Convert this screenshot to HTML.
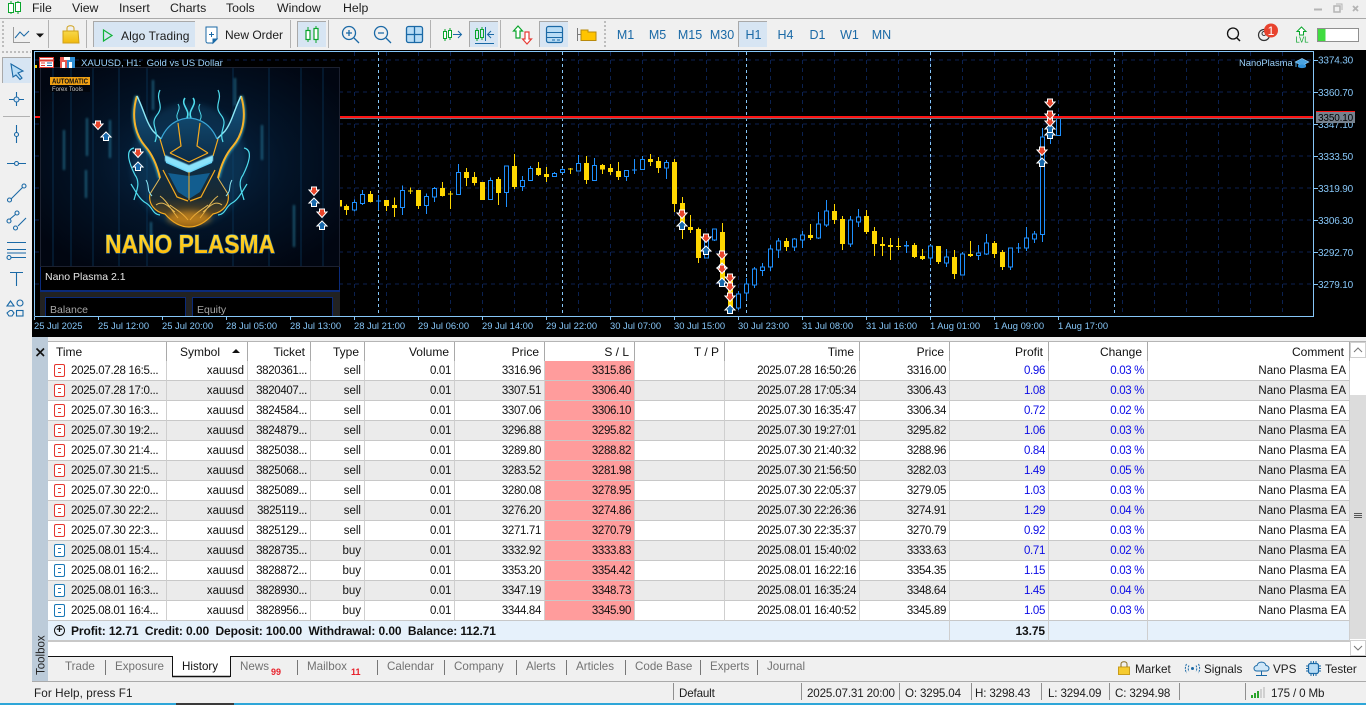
<!DOCTYPE html>
<html><head><meta charset="utf-8"><title>MetaTrader</title>
<style>
html,body{margin:0;padding:0;width:1366px;height:705px;overflow:hidden;background:#f0f0f0;font-family:"Liberation Sans",sans-serif}
svg#m{position:absolute;left:0;top:0}
svg text{font-family:"Liberation Sans",sans-serif}
.mn{font-size:12.3px;fill:#1c1c1c}
.tb{font-size:12px;fill:#1c1c1c}
.tf{font-size:12.5px;fill:#1a69a6;text-anchor:middle}
.pr{font-size:10px;fill:#86c6f7;letter-spacing:-.15px}
.tm{font-size:9.4px;fill:#86c6f7}
.tab{font-size:11.6px;fill:#727272}
.st{font-size:11.7px;fill:#1c1c1c}
.st2{font-size:11.6px;fill:#1c1c1c;letter-spacing:-.15px}
table{position:absolute;left:48px;top:342px;width:1302px;border-collapse:separate;border-spacing:0;table-layout:fixed;font-size:11.5px;letter-spacing:-.35px;color:#111;background:#fff}
td,th{height:20px;padding:1px 3px 0 0;box-sizing:border-box;text-align:right;white-space:nowrap;overflow:hidden;border-right:1px solid #cfcfcf;border-bottom:1px solid #c8c8c8;font-weight:normal;position:relative}
th{height:19px;padding:0 5px 0 0;border-right:1px solid #a9a9a9;border-bottom:0;font-size:12px;letter-spacing:0}
td:nth-child(2),td:nth-child(4),td:nth-child(13){letter-spacing:0}
th.l{text-align:left;padding-left:8px}
tr.a td{background:#ebebeb}
td.sl,tr.a td.sl{background:#ff9c9c}
td.n{text-align:left;padding-left:23px;letter-spacing:-.3px}
td.b{color:#0a0ae6}
i{position:absolute;left:6px;top:3px;width:9px;height:11px;border:1px solid #e5352d;border-radius:2px;background:#fff}
i:before,i:after{content:"";position:absolute;left:3px;width:3px;height:1px;background:#e5352d}
i:before{top:3px}i:after{top:7px}
i.u{border-color:#1977b5}i.u:before,i.u:after{background:#1977b5}
tr.s td{background:#e6f1fb;font-weight:bold;color:#111;font-size:12px;letter-spacing:-.1px}
tr.s td.n{padding-left:23px;overflow:visible}
</style></head><body>
<svg id="m" width="1366" height="705" viewBox="0 0 1366 705" xmlns="http://www.w3.org/2000/svg">
<defs>
<radialGradient id="bg" cx="50%" cy="48%" r="62%"><stop offset="0" stop-color="#08294a"/><stop offset=".5" stop-color="#031428"/><stop offset="1" stop-color="#010611"/></radialGradient>
<linearGradient id="hm" x1="0" y1="0" x2="0" y2="1"><stop offset="0" stop-color="#14547e"/><stop offset=".5" stop-color="#0b2c48"/><stop offset=".78" stop-color="#1b2a30"/><stop offset="1" stop-color="#8a5a14"/></linearGradient>
<linearGradient id="gd" x1="0" y1="0" x2="0" y2="1"><stop offset="0" stop-color="#ffe23a"/><stop offset="1" stop-color="#ffb400"/></linearGradient>
<linearGradient id="bag" x1="0" y1="0" x2="0" y2="1"><stop offset="0" stop-color="#f7d84a"/><stop offset="1" stop-color="#f2b90c"/></linearGradient>
<filter id="b1" x="-50%" y="-50%" width="200%" height="200%"><feGaussianBlur stdDeviation="1"/></filter>
<filter id="b2" x="-50%" y="-50%" width="200%" height="200%"><feGaussianBlur stdDeviation="3"/></filter>
<filter id="b3" x="-50%" y="-50%" width="200%" height="200%"><feGaussianBlur stdDeviation=".5"/></filter>
<g id="dn"><path d="M-2.500 -4H2.500V-1H5L0 4.500L-5 -1H-2.500Z" fill="#e8452b" stroke="#fff" stroke-width="1"/></g>
<g id="up"><path d="M-2.500 4.500H2.500V1H5L0 -4L-5 1H-2.500Z" fill="#1668ac" stroke="#fff" stroke-width="1"/></g>
<g id="half">
<path d="M137 96C132 112 133 132 145 146C152 154 157 165 160 178" fill="none" stroke="#4fdcee" stroke-width="4" opacity=".55" filter="url(#b1)"/>
<path d="M189 118C175 119 166 127 161 139L153 131C146 122 144 110 137 96C132 112 133 132 145 146C152 154 157 165 160 178C157 184 152 188 150 194C148 204 155 212 165 214C172 222 180 227 189 227Z" fill="url(#hm)"/>
<path d="M137 96C132 112 133 132 145 146C152 154 157 165 160 178" fill="none" stroke="#f7b32a" stroke-width="2"/>
<path d="M137 96C144 110 146 122 153 131L161 139" fill="none" stroke="#8ee9f7" stroke-width="1.400"/>
<path d="M161 139C166 127 175 119 189 118" fill="none" stroke="#3aa6d6" stroke-width="1.200"/>
<path d="M178 123L181 146L170 153M160 139L165 156M163 170L177 197L188 201M150 194C148 204 155 212 165 214C172 222 180 227 189 227M170 153L189 162" fill="none" stroke="#f7ab1e" stroke-width="1.200"/>
<path d="M165 156L189 166V173L166 163Z" fill="#5fd0f5"/>
<path d="M168 173L189 176V199L178 192Z" fill="#125d8f"/>
<path d="M160 178L150 194M156 205C163 200 168 206 175 212M160 196C166 200 170 208 178 218M170 205C176 210 182 212 188 220" fill="none" stroke="#f7c85a" stroke-width="1" opacity=".9"/>
<path d="M160 90C155 100 165 105 157 115S160 130 155 142" fill="none" stroke="#4fdcee" stroke-width="1.200"/>
<path d="M193 98C198 105 187 110 191 118" fill="none" stroke="#4fdcee" stroke-width="1.600"/>
<path d="M178 104C182 110 174 114 178 120" fill="none" stroke="#4fdcee" stroke-width="1"/>
<path d="M134 148C124 150 130 165 135 175C141 183 136 192 134 200" fill="none" stroke="#4fdcee" stroke-width="1.200"/>
<path d="M131 184C136 192 140 200 146 203C153 207 152 214 160 215" fill="none" stroke="#4fdcee" stroke-width="1.200"/>
<path d="M146 180C150 186 146 190 152 196" fill="none" stroke="#8ee9f7" stroke-width="1"/>
</g>
</defs>

<!-- base menu -->
<rect width="1366" height="18" fill="#f0f0f0"/>
<rect y="18" width="1366" height="1" fill="#a9a9a9"/>
<path d="M11 1V14M18 1V14" stroke="#0aa52c" stroke-width="1"/>
<rect x="8.500" y="3.500" width="5" height="9" fill="#fff" stroke="#0aa52c"/><rect x="15.500" y="2.500" width="5" height="9" fill="#fff" stroke="#0aa52c"/>
<text class="mn" x="32" y="12">File</text><text class="mn" x="72" y="12">View</text><text class="mn" x="119" y="12">Insert</text><text class="mn" x="170" y="12">Charts</text><text class="mn" x="226" y="12">Tools</text><text class="mn" x="277" y="12">Window</text><text class="mn" x="343" y="12">Help</text>
<path d="M1314 9.500H1322" stroke="#b4b4b4" stroke-width="2"/>
<rect x="1334" y="6" width="6" height="6" fill="none" stroke="#b4b4b4" stroke-width="1.500"/><path d="M1336 4H1342V10" fill="none" stroke="#b4b4b4" stroke-width="1"/>
<path d="M1353 6L1358 11M1358 6L1353 11" stroke="#b4b4b4" stroke-width="1.800"/>

<!-- toolbar -->
<path d="M3 21V48" stroke="#bdbdbd" stroke-width="2" stroke-dasharray="2 2"/>
<path d="M13.500 27V42.500H30" fill="none" stroke="#9a9a9a"/><path d="M15 38L20 32L24 36L29 31" fill="none" stroke="#1a69a6"/>
<path d="M36 33.500H44L40 37.500Z" fill="#111"/>
<path d="M48.500 20V48M86.500 20V48M290.500 20V48M328.500 20V48M430.500 20V48M500.500 20V48" stroke="#b2b2b2"/>
<path d="M63 31H78L79 43H63Z" fill="url(#bag)" stroke="#cfa11b"/><path d="M67 31V28C67 25 74 25 74 28V31" fill="none" stroke="#cfa11b"/>
<rect x="93" y="21" width="102" height="26" fill="#d7e5f3"/><path d="M93.500 47V21.500H195" fill="none" stroke="#a9a9a9"/>
<path d="M103.500 30V41L112 35.500Z" fill="none" stroke="#12b33a" stroke-width="1.200"/>
<text class="tb" x="121" y="40" letter-spacing=".1">Algo Trading</text>
<path d="M206 27H217V39L213 43H208C206 43 206 42 206 41Z" fill="#fff" stroke="#1a69a6"/><path d="M209 34.500H214M211.500 32V37M213 43L217 39H213Z" stroke="#1a69a6" fill="#1a69a6"/>
<text class="tb" x="225" y="39">New Order</text>
<rect x="297" y="21" width="29" height="26" fill="#d7e5f3"/><path d="M297.500 47V21.500H326" fill="none" stroke="#a9a9a9"/>
<path d="M308 27V42M316 26V43" stroke="#0aa52c"/><rect x="306" y="30.500" width="4" height="9" fill="#fff" stroke="#0aa52c" stroke-width="1.200"/><rect x="314" y="28.500" width="4" height="11" fill="#fff" stroke="#0aa52c" stroke-width="1.200"/>
<g fill="none" stroke="#1a69a6" stroke-width="1.300"><circle cx="349" cy="33" r="6.500"/><path d="M354 38L359 43M346 33H352M349 30V36"/><circle cx="381" cy="33" r="6.500"/><path d="M386 38L391 43M378 33H384"/></g>
<rect x="406.500" y="26.500" width="16" height="16" rx="2" fill="#b8dcf5" stroke="#1a69a6" stroke-width="1.300"/><path d="M414.500 27V42M407 34.500H422" stroke="#1a69a6" stroke-width="1.300"/>
<g stroke="#0aa52c" fill="#fff"><path d="M445 29V41M450 28V40" /><rect x="443.500" y="31.500" width="3" height="7"/><rect x="448.500" y="30.500" width="3" height="7"/></g>
<path d="M453 34.500H461M458 31L461.500 34.500L458 38" fill="none" stroke="#1a69a6"/>
<rect x="469" y="21" width="29" height="26" fill="#d7e5f3"/><path d="M469.500 47V21.500H498" fill="none" stroke="#a9a9a9"/>
<g stroke="#0aa52c" fill="#d7e5f3"><path d="M477 28V41M482 27V40"/><rect x="475.500" y="30.500" width="3" height="8"/><rect x="480.500" y="29.500" width="3" height="8"/></g>
<path d="M485.500 27V41M494 34.500H488M491 31L487.500 34.500L491 38M475 43.500H494" fill="none" stroke="#1a69a6"/>
<path d="M518 26L513.500 31H516V38H520V31H522.500Z" fill="#fff" stroke="#0aa52c" stroke-width="1.200"/><path d="M527 44L531.500 39H529V32H525V39H522.500Z" fill="#fff" stroke="#e63b35" stroke-width="1.200"/>
<rect x="539" y="21" width="29" height="26" fill="#d7e5f3"/><path d="M539.500 47V21.500H568" fill="none" stroke="#a9a9a9"/>
<rect x="546.500" y="26.500" width="16" height="16" rx="2" fill="#b8dcf5" stroke="#1a69a6" stroke-width="1.200"/><path d="M547 32.500H562M547 37.500H562M552 40H555M557 40H560" stroke="#1a69a6"/>
<path d="M577.500 28V41M578 34.500H581" stroke="#7a7a7a"/><path d="M581 30H588V32H596V40.500H581Z" fill="#ffc400" stroke="#b98a0c"/>
<path d="M605 21V48" stroke="#bdbdbd" stroke-width="2" stroke-dasharray="2 2"/>
<rect x="738" y="21" width="29" height="26" fill="#d7e5f3"/><path d="M738.500 47V21.500H767" fill="none" stroke="#a9a9a9"/>
<text class="tf" x="625.500" y="39">M1</text><text class="tf" x="657.500" y="39">M5</text><text class="tf" x="690" y="39">M15</text><text class="tf" x="722" y="39">M30</text><text class="tf" x="753.500" y="39">H1</text><text class="tf" x="785.500" y="39">H4</text><text class="tf" x="817.500" y="39">D1</text><text class="tf" x="849.500" y="39">W1</text><text class="tf" x="881.500" y="39">MN</text>
<circle cx="1233" cy="33.500" r="5.500" fill="none" stroke="#111" stroke-width="1.300"/><path d="M1237 38L1240 41" stroke="#111" stroke-width="1.500"/>
<circle cx="1264" cy="35" r="5.500" fill="none" stroke="#333" stroke-width="1.200"/><circle cx="1264" cy="33.500" r="2" fill="none" stroke="#333"/>
<circle cx="1271" cy="30.500" r="7" fill="#e8432e"/><text x="1271" y="35" font-size="12" fill="#fff" text-anchor="middle">1</text>
<path d="M1301.500 27L1297 31.500H1299.500V35H1303.500V31.500H1306Z" fill="#fff" stroke="#0aa52c"/><text x="1295.500" y="42.500" font-size="8" fill="#0aa52c" textLength="13" lengthAdjust="spacingAndGlyphs">LVL</text>
<rect x="1317.500" y="28.500" width="41" height="13" fill="#fff" stroke="#8f8f8f"/><rect x="1318" y="29" width="7.500" height="12" fill="#3fdc3f"/>

<!-- black chart zone -->
<rect x="32" y="50" width="1334" height="287" fill="#000"/>
<path stroke="#0b2150" fill="none" stroke-dasharray="4 4" d="M35 60H1313M35 92H1313M35 124H1313M35 156H1313M35 188H1313M35 220H1313M35 252H1313M35 284H1313"/>
<path stroke="#0b2150" fill="none" stroke-dasharray="4 4" d="M354.500 52V316M386.500 52V316M418.500 52V316M450.500 52V316M482.500 52V316M514.500 52V316M546.500 52V316M578.500 52V316M610.500 52V316M642.500 52V316M674.500 52V316M706.500 52V316M738.500 52V316M770.500 52V316M802.500 52V316M834.500 52V316M866.500 52V316M898.500 52V316M930.500 52V316M962.500 52V316M994.500 52V316M1026.500 52V316M1058.500 52V316M1090.500 52V316M1122.500 52V316M1154.500 52V316M1186.500 52V316M1218.500 52V316M1250.500 52V316M1282.500 52V316"/>
<path stroke="#86c6f7" fill="none" stroke-dasharray="3 3" d="M378.500 52V316M562.500 52V316M746.500 52V316M930.500 52V316M1114.500 52V316"/>

<!-- candles A -->
<g transform="translate(340.170 140) scale(.33333)" shape-rendering="crispEdges">
<path fill="none" stroke="#ffd700" stroke-width="3" d="M19 193V225M91 153V187M139 180V213M163 172V231M211 142V162M235 150V207M307 126V170M331 153V207M379 84V138M403 96V136M427 126V180M475 111V195M523 42V147M595 66V108M619 81V126M691 84V102M739 48V132M787 72V102M811 72V105M835 66V120M931 42V78M955 51V99M1003 57V216M1027 171V297M1051 225V279M1075 262V369M1147 249V420M1171 402V510"/>
<path fill="#ffd700" d="M-10 180h15v20h-15zM12 198h15v12h-15zM84 162h15v24h-15zM132 180h15v18h-15zM156 195h15v9h-15zM204 151h15v3h-15zM228 150h15v48h-15zM300 144h15v24h-15zM324 160h15v3h-15zM372 96h15v18h-15zM396 111h15v18h-15zM420 126h15v54h-15zM468 117h15v42h-15zM516 78h15v63h-15zM588 84h15v21h-15zM612 102h15v9h-15zM684 86h15v3h-15zM732 69h15v51h-15zM780 75h15v13h-15zM804 84h15v12h-15zM828 93h15v18h-15zM924 57h15v9h-15zM948 63h15v21h-15zM996 66h15v126h-15zM1020 189h15v61h-15zM1044 261h15v9h-15zM1068 267h15v87h-15zM1140 276h15v144h-15zM1164 402h15v108h-15z"/>
<path fill="none" stroke="#1e90ff" stroke-width="3" d="M43 178V215M67 150V195M115 165V210M187 136V225M259 160V222M283 141V186M355 72V165M451 112V180M499 76V201M547 108V153M571 78V123M643 96V111M667 84V100M715 45V93M763 54V123M859 90V123M883 57V102M907 48V90M979 60V117M1099 282V355M1123 267V303"/>
<path fill="#000" stroke="#1e90ff" stroke-width="3" d="M37 187h12v23h-12zM61 163h12v28h-12zM181 151h12v52h-12zM253 169h12v28h-12zM277 145h12v26h-12zM349 97h12v67h-12zM445 121h12v58h-12zM493 78h12v79h-12zM541 121h12v19h-12zM565 85h12v37h-12zM637 100h12v9h-12zM661 88h12v10h-12zM709 70h12v23h-12zM757 76h12v46h-12zM853 91h12v19h-12zM901 58h12v31h-12zM973 67h12v17h-12zM1093 285h12v69h-12zM1117 267h12v33h-12z"/>
<path fill="#1e90ff" d="M108 181h15v4h-15zM876 88h15v4h-15z"/>
</g>
<!-- candles B -->
<g transform="translate(700.170 90) scale(.33333)" shape-rendering="crispEdges">
<path fill="none" stroke="#ffd700" stroke-width="3" d="M259 444V483M331 402V450M403 342V402M427 378V480M499 360V432M523 411V498M547 441V498M571 444V510M595 444V480M643 459V504M667 477V510M715 468V522M763 480V567M811 453V501M883 453V504M907 480V540"/>
<path fill="#ffd700" d="M252 453h15v18h-15zM324 435h15v9h-15zM396 363h15v27h-15zM420 387h15v75h-15zM492 378h15v48h-15zM516 423h15v39h-15zM540 462h15v6h-15zM564 465h15v6h-15zM588 468h15v3h-15zM636 465h15v36h-15zM660 498h15v9h-15zM708 468h15v48h-15zM756 501h15v51h-15zM804 492h15v6h-15zM876 459h15v33h-15zM900 486h15v45h-15z"/>
<path fill="none" stroke="#1e90ff" stroke-width="3" d="M115 603V660M139 564V630M163 531V594M187 519V558M211 465V543M235 444V504M283 444V483M307 423V474M355 366V447M379 330V411M451 378V471M475 357V411M619 453V489M691 465V522M739 477V531M787 486V555M835 465V510M859 432V495M931 474V540M955 459V489M979 411V483M1003 423V459M1027 114V456M1051 100V162M1075 72V137"/>
<path fill="#000" stroke="#1e90ff" stroke-width="3" d="M109 612h12v42h-12zM133 582h12v27h-12zM157 537h12v48h-12zM181 531h12v11h-12zM205 477h12v54h-12zM229 453h12v27h-12zM277 447h12v24h-12zM301 435h12v15h-12zM349 402h12v42h-12zM373 363h12v42h-12zM445 390h12v72h-12zM469 381h12v15h-12zM685 468h12v36h-12zM733 501h12v18h-12zM781 492h12v63h-12zM829 489h12v7h-12zM853 459h12v33h-12zM925 474h12v57h-12zM973 444h12v30h-12zM997 432h12v15h-12zM1021 141h12v293h-12zM1069 81h12v56h-12z"/>
<path fill="#1e90ff" d="M612 465h15v4h-15zM948 472h15v4h-15z"/>
</g>

<!-- panel -->
<rect x="40" y="67" width="300" height="200" fill="url(#bg)"/>
<rect x="40.500" y="67.500" width="299" height="199" fill="none" stroke="#1c2130"/>
<g fill="#0a3558" opacity=".4"><rect x="52" y="68" width="2" height="198"/><rect x="70" y="68" width="2" height="198"/><rect x="92" y="68" width="2" height="198"/><rect x="118" y="68" width="2" height="198"/><rect x="146" y="68" width="2" height="198"/><rect x="232" y="68" width="2" height="198"/><rect x="268" y="68" width="2" height="198"/><rect x="300" y="68" width="2" height="198"/><rect x="322" y="68" width="2" height="198"/></g>
<g fill="#38a9cf" filter="url(#b1)" opacity=".5"><rect x="63" y="130" width="2" height="40"/><rect x="86" y="118" width="2" height="38"/><rect x="109" y="120" width="2" height="38"/><rect x="152" y="80" width="2" height="30"/><rect x="85" y="170" width="2" height="28"/><rect x="150" y="222" width="2" height="26"/><rect x="261" y="125" width="2" height="35"/><rect x="293" y="205" width="2" height="42"/><rect x="234" y="78" width="2" height="28"/></g>
<ellipse cx="189" cy="165" rx="58" ry="62" fill="#1b6fa0" opacity=".22" filter="url(#b2)"/>
<use href="#half"/><use href="#half" transform="translate(378 0) scale(-1 1)"/>
<path d="M165 155L189 165L213 155L213 161L189 172L165 161Z" fill="#8ae2fb" filter="url(#b3)"/>
<path d="M189 172V200" stroke="#f7ab1e"/>
<ellipse cx="189" cy="218" rx="22" ry="7" fill="#e89a1c" opacity=".6" filter="url(#b2)"/>
<rect x="50" y="77" width="40" height="8" fill="#f0a114"/><rect x="50" y="85" width="40" height="7" fill="#02060d"/>
<text x="52" y="83.500" font-size="7" font-weight="bold" fill="#111" textLength="36" lengthAdjust="spacingAndGlyphs">AUTOMATIC</text>
<text x="52" y="91" font-size="6" fill="#c8c8c8">Forex Tools</text>
<text x="105" y="253" font-size="26" font-weight="bold" fill="url(#gd)" stroke="#2d6797" stroke-width="1.200" paint-order="stroke" textLength="170" lengthAdjust="spacingAndGlyphs">NANO PLASMA</text>
<rect x="40" y="267" width="300" height="25" fill="#000"/><path d="M40.500 267V292M339.500 267V292" stroke="#0a2a7a"/>
<rect x="40" y="290" width="300" height="2" fill="#0a2a7a"/>
<rect x="40" y="292" width="300" height="24" fill="#222"/>
<rect x="45.500" y="297.500" width="140" height="19" fill="#000" stroke="#0a2a7a"/><rect x="192.500" y="297.500" width="140" height="19" fill="#000" stroke="#0a2a7a"/>
<text x="45" y="280" font-size="10.500" fill="#e8e8e8">Nano Plasma 2.1</text>
<text x="50" y="313" font-size="10.500" fill="#a8a8a8">Balance</text><text x="197" y="313" font-size="10.500" fill="#a8a8a8">Equity</text>

<!-- red line -->
<rect x="35" y="116" width="5" height="2" fill="#ff1414"/><rect x="340" y="116" width="973" height="2" fill="#ff1414"/><rect x="340" y="118" width="973" height="1" fill="#6f747e"/>
<!-- markers -->
<use href="#dn" x="98" y="125"/><use href="#up" x="106" y="136"/><use href="#dn" x="138" y="153"/><use href="#up" x="138" y="166"/><use href="#dn" x="314" y="191"/><use href="#up" x="314" y="202"/><use href="#dn" x="322" y="213"/><use href="#up" x="322" y="225"/>
<use href="#up" x="682" y="225"/><use href="#dn" x="682" y="214"/><use href="#up" x="706" y="250"/><use href="#dn" x="706" y="238"/><use href="#up" x="722" y="267"/><use href="#dn" x="722" y="255"/><use href="#up" x="722" y="282"/><use href="#dn" x="722" y="269"/><use href="#up" x="730" y="309"/><use href="#dn" x="730" y="297"/><use href="#dn" x="730" y="287"/><use href="#dn" x="730" y="278"/>
<use href="#up" x="1042" y="162"/><use href="#dn" x="1042" y="151"/><use href="#up" x="1050" y="134"/><use href="#up" x="1050" y="128"/><use href="#dn" x="1050" y="122"/><use href="#dn" x="1050" y="115"/><use href="#dn" x="1050" y="103"/>

<!-- frame -->
<path d="M34.500 316.500V51.500H1313.500V316.500H34.500" fill="none" stroke="#86c6f7"/>
<path stroke="#86c6f7" d="M1314 60.500H1318M1314 92.500H1318M1314 124.500H1318M1314 156.500H1318M1314 188.500H1318M1314 220.500H1318M1314 252.500H1318M1314 284.500H1318"/>
<path stroke="#86c6f7" d="M34.500 317V320M98.500 317V320M162.500 317V320M226.500 317V320M290.500 317V320M354.500 317V320M418.500 317V320M482.500 317V320M546.500 317V320M610.500 317V320M674.500 317V320M738.500 317V320M802.500 317V320M866.500 317V320M930.500 317V320M994.500 317V320M1058.500 317V320"/>
<rect x="35" y="65" width="2" height="3" fill="#ffd700"/>
<text class="pr" x="1318" y="63.500">3374.30</text><text class="pr" x="1318" y="96">3360.70</text><text class="pr" x="1318" y="128">3347.10</text><text class="pr" x="1318" y="160">3333.50</text><text class="pr" x="1318" y="192">3319.90</text><text class="pr" x="1318" y="224">3306.30</text><text class="pr" x="1318" y="256">3292.70</text><text class="pr" x="1318" y="288">3279.10</text>
<rect x="1316" y="111" width="39" height="1" fill="#ff1414"/><rect x="1316" y="112" width="39" height="11" fill="#77828e"/><text x="1318" y="121" font-size="10" fill="#000" letter-spacing="-.15">3350.10</text>
<text class="tm" x="34" y="329">25 Jul 2025</text><text class="tm" x="98" y="329">25 Jul 12:00</text><text class="tm" x="162" y="329">25 Jul 20:00</text><text class="tm" x="226" y="329">28 Jul 05:00</text><text class="tm" x="290" y="329">28 Jul 13:00</text><text class="tm" x="354" y="329">28 Jul 21:00</text><text class="tm" x="418" y="329">29 Jul 06:00</text><text class="tm" x="482" y="329">29 Jul 14:00</text><text class="tm" x="546" y="329">29 Jul 22:00</text><text class="tm" x="610" y="329">30 Jul 07:00</text><text class="tm" x="674" y="329">30 Jul 15:00</text><text class="tm" x="738" y="329">30 Jul 23:00</text><text class="tm" x="802" y="329">31 Jul 08:00</text><text class="tm" x="866" y="329">31 Jul 16:00</text><text class="tm" x="930" y="329">1 Aug 01:00</text><text class="tm" x="994" y="329">1 Aug 09:00</text><text class="tm" x="1058" y="329">1 Aug 17:00</text>
<!-- title -->
<rect x="39.500" y="57.500" width="14" height="10" fill="#fff" stroke="#e23b30"/><path d="M40 60.500H53" stroke="#e23b30" stroke-width="2"/><path d="M41 63H45M41 65.500H45" stroke="#e23b30"/><path d="M47 63H52M47 65.500H52" stroke="#1a69a6"/>
<path d="M60 57H67V68H60Z" fill="#e8584f"/><path d="M67 57H75V68H67Z" fill="#2f8fd6"/><rect x="64" y="57" width="6" height="3" fill="#fff"/><rect x="62" y="62" width="3" height="6" fill="#fff"/><rect x="69" y="62" width="3" height="6" fill="#fff"/>
<text x="81" y="66" font-size="9.600" fill="#9bd2fb" xml:space="preserve">XAUUSD, H1:  Gold vs US Dollar</text>
<text x="1239" y="66" font-size="9.400" fill="#9bd2fb">NanoPlasma</text>
<path d="M1295 62L1302 58.500L1309 62L1302 65.500Z" fill="#4aa3e0" stroke="#9bd2fb" stroke-width=".6"/><path d="M1298 64.500V67C1300 68.500 1304 68.500 1306 67V64.500" fill="#2f8fd6"/><path d="M1296 62.500V67" stroke="#4aa3e0"/>

<!-- left toolbar -->
<path d="M2 52H31" stroke="#bdbdbd" stroke-width="2" stroke-dasharray="2 2"/>
<rect x="2" y="57" width="29" height="26" fill="#d7e5f3"/><path d="M2.500 83V57.500H31" fill="none" stroke="#a9a9a9"/>
<g fill="none" stroke="#1a69a6" stroke-width="1.100">
<path d="M11 64L23 71L18 73L22 78L20 79.500L16 75L13 77Z" fill="#b8dcf5"/>
<path d="M16.500 92V106M9 99.500H24"/><circle cx="16.500" cy="99.500" r="2.500" fill="#d7e5f3"/>
<path d="M16.500 125V143"/><circle cx="16.500" cy="134.500" r="2" fill="#f0f0f0"/>
<path d="M7 163.500H26"/><circle cx="16.500" cy="163.500" r="2" fill="#f0f0f0"/>
<path d="M11 199L23 187"/><circle cx="9.500" cy="200" r="2" fill="#f0f0f0"/><circle cx="24" cy="186" r="2" fill="#f0f0f0"/>
<path d="M10 219L16 214M18 226L26 218"/><circle cx="9" cy="221" r="2" fill="#f0f0f0"/><circle cx="17" cy="213" r="2" fill="#f0f0f0"/><circle cx="15.500" cy="228" r="2" fill="#f0f0f0"/>
<path d="M7 242.500H26M7 249.500H26M11 257.500H26M7 253H26" /><circle cx="9" cy="257.500" r="2" fill="#f0f0f0"/>
<path d="M10 272.500H23M16.500 273V286"/>
<path d="M7 306L10.500 301L14 306Z"/><circle cx="20" cy="303" r="3"/><path d="M7 313L10 310.500H12L14 313L12 316H9Z"/><rect x="16.500" y="310.500" width="6.500" height="5.500"/>
</g>
<path d="M3 116.500H30" stroke="#b2b2b2"/>

<!-- toolbox bar -->
<rect x="32" y="337" width="1334" height="344" fill="#f0f0f0"/>
<rect x="32" y="337" width="16" height="344" fill="#bccbd9"/>
<path d="M36.500 348.500L44 356M44 348.500L36.500 356" stroke="#111" stroke-width="1.600"/>
<text transform="translate(44.500 675) rotate(-90)" font-size="11.500" fill="#222">Toolbox</text>
<rect x="48" y="341" width="1318" height="1" fill="#b5b5b5"/>
<rect x="48" y="641" width="1318" height="15" fill="#fff"/>
<rect x="48" y="641" width="1302" height="1" fill="#c8c8c8"/>
<!-- scrollbar -->
<rect x="1350" y="342" width="16" height="314" fill="#fff"/>
<rect x="1350" y="395" width="16" height="244" fill="#dcdcdc"/>
<rect x="1350.500" y="342.500" width="15" height="15" fill="#fff" stroke="#d0d0d0"/><path d="M1354 352L1358 348L1362 352" fill="none" stroke="#777"/>
<rect x="1350.500" y="640.500" width="15" height="15" fill="#fff" stroke="#d0d0d0"/><path d="M1354 646L1358 650L1362 646" fill="none" stroke="#777"/>
<path d="M1354 513.500H1362M1354 515.500H1362M1354 517.500H1362" stroke="#555"/>
<!-- tabs -->
<rect x="48" y="656" width="1318" height="1" fill="#111"/>
<rect x="48" y="657" width="1318" height="24" fill="#f0f0f0"/>
<rect x="32" y="681" width="1334" height="1" fill="#aaa"/>
<path d="M172.500 657V676.500H230.500V657" fill="#fff" stroke="#111" stroke-width="1"/>
<path d="M172 676.500H230" stroke="#111" stroke-width="1.500"/>
<rect x="173" y="656" width="57" height="1" fill="#fff"/>
<path stroke="#777" d="M105.500 660V675M297.500 660V675M377.500 660V675M444.500 660V675M516.500 660V675M566.500 660V675M625.500 660V675M700.500 660V675M757.500 660V675"/>
<text class="tab" x="65" y="670">Trade</text><text class="tab" x="115" y="670">Exposure</text><text x="182" y="670" font-size="11.600" fill="#111">History</text><text class="tab" x="240" y="670">News</text><text x="271" y="675" font-size="9" font-weight="bold" fill="#e8212b">99</text><text class="tab" x="307" y="670">Mailbox</text><text x="351" y="675" font-size="9" font-weight="bold" fill="#e8212b">11</text><text class="tab" x="387" y="670">Calendar</text><text class="tab" x="454" y="670">Company</text><text class="tab" x="526" y="670">Alerts</text><text class="tab" x="576" y="670">Articles</text><text class="tab" x="635" y="670">Code Base</text><text class="tab" x="710" y="670">Experts</text><text class="tab" x="767" y="670">Journal</text>
<path d="M1118.500 667H1129.500V674.500H1118.500Z" fill="#f6cb2f" stroke="#c99c1a"/><path d="M1121 667V664C1121 661 1127 661 1127 664V667" fill="none" stroke="#8a6d20"/>
<text class="st" x="1135" y="673">Market</text>
<g fill="none" stroke="#1a69a6"><circle cx="1192.500" cy="668.500" r="1" fill="#1a69a6"/><path d="M1189 665.500C1188 667 1188 670 1189 671.500M1196 665.500C1197 667 1197 670 1196 671.500M1186.500 664C1185 667 1185 670 1186.500 673M1198.500 664C1200 667 1200 670 1198.500 673" stroke-dasharray="2 1"/></g>
<text class="st" x="1204" y="673">Signals</text>
<path d="M1257 671C1253 671 1253 666 1257 665.500C1258 661 1265 661 1266 665.500C1270 666 1270 671 1266 671Z" fill="#cfe7f8" stroke="#1a69a6"/><path d="M1261.500 671V675M1256 675.500H1267" stroke="#1a69a6"/>
<text class="st" x="1273" y="673">VPS</text>
<rect x="1308.500" y="663.500" width="10" height="10" rx="2" fill="#b8dcf5" stroke="#1a69a6" stroke-width="1.200"/><path stroke="#1a69a6" d="M1306 666H1308M1306 668.500H1308M1306 671H1308M1319 666H1321M1319 668.500H1321M1319 671H1321M1311 661V663M1313.500 661V663M1316 661V663M1311 674V676M1313.500 674V676M1316 674V676"/>
<text class="st" x="1325" y="673">Tester</text>
<!-- status -->
<rect y="682" width="1366" height="21" fill="#f0f0f0"/>
<text class="st" x="34" y="697" font-size="12" letter-spacing=".1">For Help, press F1</text>
<path stroke="#8f8f8f" d="M673.500 683V700M801.500 683V700M899.500 683V700M971.500 683V700M1041.500 683V700M1109.500 683V700M1179.500 683V700M1245.500 683V700"/>
<text class="st2" x="679" y="697">Default</text><text class="st2" x="807" y="697">2025.07.31 20:00</text><text class="st2" x="905" y="697">O: 3295.04</text><text class="st2" x="975" y="697">H: 3298.43</text><text class="st2" x="1048" y="697">L: 3294.09</text><text class="st2" x="1115" y="697">C: 3294.98</text><text class="st2" x="1271" y="697">175 / 0 Mb</text>
<rect x="1251" y="695" width="2" height="3" fill="#2aa52c"/><rect x="1254" y="693" width="2" height="5" fill="#2aa52c"/><rect x="1257" y="691" width="2" height="7" fill="#2aa52c"/><rect x="1260" y="689" width="2" height="9" fill="#d0d0d0"/><rect x="1263" y="687" width="2" height="11" fill="#d0d0d0"/>
<rect y="703" width="1366" height="2" fill="#2ea6d8"/><rect x="176" y="703" width="58" height="2" fill="#3a3a3a"/>
</svg>

<table>
<colgroup><col style="width:119px"><col style="width:81px"><col style="width:63px"><col style="width:54px"><col style="width:90px"><col style="width:90px"><col style="width:90px"><col style="width:90px"><col style="width:135px"><col style="width:90px"><col style="width:99px"><col style="width:99px"><col style="width:202px"></colgroup>
<tr><th class="l">Time</th><th class="l" style="padding-left:13px">Symbol<span style="display:inline-block;width:0;height:0;border:4px solid transparent;border-bottom:4px solid #111;border-top:0;margin-left:12px;vertical-align:3px"></span></th><th>Ticket</th><th>Type</th><th>Volume</th><th>Price</th><th>S / L</th><th>T / P</th><th>Time</th><th>Price</th><th>Profit</th><th>Change</th><th>Comment</th></tr>
<tr><td class="n"><i></i>2025.07.28 16:5...</td><td>xauusd</td><td>3820361...</td><td>sell</td><td>0.01</td><td>3316.96</td><td class="sl">3315.86</td><td></td><td>2025.07.28 16:50:26</td><td>3316.00</td><td class="b">0.96</td><td class="b">0.03 %</td><td>Nano Plasma EA</td></tr>
<tr class="a"><td class="n"><i></i>2025.07.28 17:0...</td><td>xauusd</td><td>3820407...</td><td>sell</td><td>0.01</td><td>3307.51</td><td class="sl">3306.40</td><td></td><td>2025.07.28 17:05:34</td><td>3306.43</td><td class="b">1.08</td><td class="b">0.03 %</td><td>Nano Plasma EA</td></tr>
<tr><td class="n"><i></i>2025.07.30 16:3...</td><td>xauusd</td><td>3824584...</td><td>sell</td><td>0.01</td><td>3307.06</td><td class="sl">3306.10</td><td></td><td>2025.07.30 16:35:47</td><td>3306.34</td><td class="b">0.72</td><td class="b">0.02 %</td><td>Nano Plasma EA</td></tr>
<tr class="a"><td class="n"><i></i>2025.07.30 19:2...</td><td>xauusd</td><td>3824879...</td><td>sell</td><td>0.01</td><td>3296.88</td><td class="sl">3295.82</td><td></td><td>2025.07.30 19:27:01</td><td>3295.82</td><td class="b">1.06</td><td class="b">0.03 %</td><td>Nano Plasma EA</td></tr>
<tr><td class="n"><i></i>2025.07.30 21:4...</td><td>xauusd</td><td>3825038...</td><td>sell</td><td>0.01</td><td>3289.80</td><td class="sl">3288.82</td><td></td><td>2025.07.30 21:40:32</td><td>3288.96</td><td class="b">0.84</td><td class="b">0.03 %</td><td>Nano Plasma EA</td></tr>
<tr class="a"><td class="n"><i></i>2025.07.30 21:5...</td><td>xauusd</td><td>3825068...</td><td>sell</td><td>0.01</td><td>3283.52</td><td class="sl">3281.98</td><td></td><td>2025.07.30 21:56:50</td><td>3282.03</td><td class="b">1.49</td><td class="b">0.05 %</td><td>Nano Plasma EA</td></tr>
<tr><td class="n"><i></i>2025.07.30 22:0...</td><td>xauusd</td><td>3825089...</td><td>sell</td><td>0.01</td><td>3280.08</td><td class="sl">3278.95</td><td></td><td>2025.07.30 22:05:37</td><td>3279.05</td><td class="b">1.03</td><td class="b">0.03 %</td><td>Nano Plasma EA</td></tr>
<tr class="a"><td class="n"><i></i>2025.07.30 22:2...</td><td>xauusd</td><td>3825119...</td><td>sell</td><td>0.01</td><td>3276.20</td><td class="sl">3274.86</td><td></td><td>2025.07.30 22:26:36</td><td>3274.91</td><td class="b">1.29</td><td class="b">0.04 %</td><td>Nano Plasma EA</td></tr>
<tr><td class="n"><i></i>2025.07.30 22:3...</td><td>xauusd</td><td>3825129...</td><td>sell</td><td>0.01</td><td>3271.71</td><td class="sl">3270.79</td><td></td><td>2025.07.30 22:35:37</td><td>3270.79</td><td class="b">0.92</td><td class="b">0.03 %</td><td>Nano Plasma EA</td></tr>
<tr class="a"><td class="n"><i class="u"></i>2025.08.01 15:4...</td><td>xauusd</td><td>3828735...</td><td>buy</td><td>0.01</td><td>3332.92</td><td class="sl">3333.83</td><td></td><td>2025.08.01 15:40:02</td><td>3333.63</td><td class="b">0.71</td><td class="b">0.02 %</td><td>Nano Plasma EA</td></tr>
<tr><td class="n"><i class="u"></i>2025.08.01 16:2...</td><td>xauusd</td><td>3828872...</td><td>buy</td><td>0.01</td><td>3353.20</td><td class="sl">3354.42</td><td></td><td>2025.08.01 16:22:16</td><td>3354.35</td><td class="b">1.15</td><td class="b">0.03 %</td><td>Nano Plasma EA</td></tr>
<tr class="a"><td class="n"><i class="u"></i>2025.08.01 16:3...</td><td>xauusd</td><td>3828930...</td><td>buy</td><td>0.01</td><td>3347.19</td><td class="sl">3348.73</td><td></td><td>2025.08.01 16:35:24</td><td>3348.64</td><td class="b">1.45</td><td class="b">0.04 %</td><td>Nano Plasma EA</td></tr>
<tr><td class="n"><i class="u"></i>2025.08.01 16:4...</td><td>xauusd</td><td>3828956...</td><td>buy</td><td>0.01</td><td>3344.84</td><td class="sl">3345.90</td><td></td><td>2025.08.01 16:40:52</td><td>3345.89</td><td class="b">1.05</td><td class="b">0.03 %</td><td>Nano Plasma EA</td></tr>
<tr class="s"><td class="n" colspan="10"><span style="position:absolute;left:6px;top:4px;width:9px;height:9px;border:1px solid #111;border-radius:50%;font:bold 11px/9px 'Liberation Sans',sans-serif;text-align:center;letter-spacing:0">+</span>Profit: 12.71&nbsp; Credit: 0.00&nbsp; Deposit: 100.00&nbsp; Withdrawal: 0.00&nbsp; Balance: 112.71</td><td>13.75</td><td></td><td></td></tr>
</table>
</body></html>
